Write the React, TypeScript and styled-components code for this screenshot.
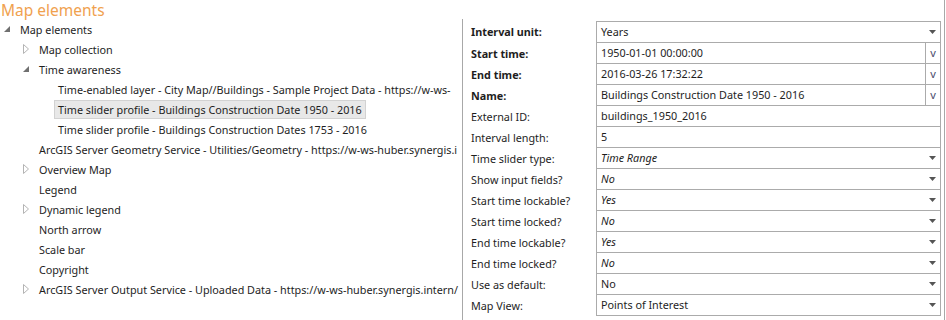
import React from 'react';
import styled, { createGlobalStyle } from 'styled-components';

const GlobalStyle = createGlobalStyle`
  html, body {
    margin: 0;
    padding: 0;
    background: #ffffff;
  }
  body {
    font-family: 'Noto Sans', 'Open Sans', 'Liberation Sans', sans-serif;
    font-size: 10.8px;
    color: #1e1e1e;
  }
`;

const Page = styled.div`
  width: 944px;
  height: 320px;
  border-right: 1px solid #a8a8a8;
  display: flex;
  flex-direction: column;
  overflow: hidden;
`;

const Title = styled.div`
  height: 21px;
  line-height: 21px;
  padding-left: 1px;
  font-size: 15.5px;
  color: #f0a14f;
`;

const Body = styled.div`
  flex: 1;
  display: flex;
  min-height: 0;
`;

const TreePanel = styled.div`
  width: 462px;
  margin-top: -2px;
  border-right: 1px solid #a8a8a8;
  overflow: hidden;
`;

const TreeRow = styled.div<{ $level: number }>`
  height: 20px;
  display: flex;
  align-items: center;
  padding-left: ${p => p.$level * 19}px;
  white-space: nowrap;
`;

const Toggle = styled.span`
  width: 16px;
  margin-left: 4px;
  display: flex;
  align-items: center;
  flex-shrink: 0;
`;

const Label = styled.span<{ $selected?: boolean }>`
  line-height: 17px;
  padding: 0 3px;
  margin-left: -4px;
  border: 1px solid ${p => (p.$selected ? '#d2d2d2' : 'transparent')};
  background: ${p => (p.$selected ? '#e8e8e8' : 'transparent')};
`;

const FormPanel = styled.div`
  flex: 1;
  padding: 0 3px 0 8px;
`;

const FieldGrid = styled.div`
  display: grid;
  grid-template-columns: 125px 1fr;
`;

const FieldLabel = styled.div<{ $bold?: boolean }>`
  height: 21px;
  line-height: 21px;
  font-weight: ${p => (p.$bold ? 700 : 400)};
  white-space: nowrap;
`;

const ValueBox = styled.div<{ $first?: boolean }>`
  height: 22px;
  box-sizing: border-box;
  margin-top: ${p => (p.$first ? 0 : -1)}px;
  border: 1px solid #ababab;
  display: flex;
  align-items: stretch;
`;

const ValueText = styled.div<{ $italic?: boolean }>`
  flex: 1;
  padding-left: 4px;
  line-height: 20px;
  font-style: ${p => (p.$italic ? 'italic' : 'normal')};
  white-space: nowrap;
  overflow: hidden;
`;

const DropArrow = styled.div`
  width: 16px;
  display: flex;
  align-items: center;
  justify-content: center;
`;

const PickButton = styled.div`
  width: 14px;
  border-left: 1px solid #ababab;
  display: flex;
  align-items: center;
  justify-content: center;
  color: #4a4a6a;
  font-size: 11px;
  line-height: 20px;
`;

const Expanded = () => (
  <svg width="6" height="6" viewBox="0 0 6 6">
    <path d="M6 0 L6 6 L0 6 Z" fill="#707070" />
  </svg>
);

const Collapsed = () => (
  <svg width="6" height="10" viewBox="0 0 6 10">
    <path d="M0.5 0.5 L5.5 5 L0.5 9.5 Z" fill="none" stroke="#b4b4b4" strokeWidth="1" />
  </svg>
);

const Caret = () => (
  <svg width="7" height="4" viewBox="0 0 7 4">
    <path d="M0 0 L7 0 L3.5 4 Z" fill="#555555" />
  </svg>
);

type Node = { text: string; level: number; toggle?: 'open' | 'closed'; selected?: boolean };

const tree: Node[] = [
  { text: 'Map elements', level: 0, toggle: 'open' },
  { text: 'Map collection', level: 1, toggle: 'closed' },
  { text: 'Time awareness', level: 1, toggle: 'open' },
  { text: 'Time-enabled layer - City Map//Buildings - Sample Project Data - https://w-ws-', level: 2 },
  { text: 'Time slider profile - Buildings Construction Date 1950 - 2016', level: 2, selected: true },
  { text: 'Time slider profile - Buildings Construction Dates 1753 - 2016', level: 2 },
  { text: 'ArcGIS Server Geometry Service - Utilities/Geometry - https://w-ws-huber.synergis.i', level: 1 },
  { text: 'Overview Map', level: 1, toggle: 'closed' },
  { text: 'Legend', level: 1 },
  { text: 'Dynamic legend', level: 1, toggle: 'closed' },
  { text: 'North arrow', level: 1 },
  { text: 'Scale bar', level: 1 },
  { text: 'Copyright', level: 1 },
  { text: 'ArcGIS Server Output Service - Uploaded Data - https://w-ws-huber.synergis.intern/', level: 1, toggle: 'closed' },
];

type Field = { label: string; value: string; bold?: boolean; italic?: boolean; kind: 'select' | 'pick' | 'text' };

const fields: Field[] = [
  { label: 'Interval unit:', value: 'Years', bold: true, kind: 'select' },
  { label: 'Start time:', value: '1950-01-01 00:00:00', bold: true, kind: 'pick' },
  { label: 'End time:', value: '2016-03-26 17:32:22', bold: true, kind: 'pick' },
  { label: 'Name:', value: 'Buildings Construction Date 1950 - 2016', bold: true, kind: 'pick' },
  { label: 'External ID:', value: 'buildings_1950_2016', kind: 'text' },
  { label: 'Interval length:', value: '5', kind: 'text' },
  { label: 'Time slider type:', value: 'Time Range', italic: true, kind: 'select' },
  { label: 'Show input fields?', value: 'No', italic: true, kind: 'select' },
  { label: 'Start time lockable?', value: 'Yes', italic: true, kind: 'select' },
  { label: 'Start time locked?', value: 'No', italic: true, kind: 'select' },
  { label: 'End time lockable?', value: 'Yes', italic: true, kind: 'select' },
  { label: 'End time locked?', value: 'No', italic: true, kind: 'select' },
  { label: 'Use as default:', value: 'No', kind: 'select' },
  { label: 'Map View:', value: 'Points of Interest', kind: 'select' },
];

export default function App() {
  return (
    <>
      <GlobalStyle />
      <Page>
        <Title>Map elements</Title>
        <Body>
          <TreePanel>
            {tree.map((n, i) => (
              <TreeRow key={i} $level={n.level}>
                <Toggle>
                  {n.toggle === 'open' && <Expanded />}
                  {n.toggle === 'closed' && <Collapsed />}
                </Toggle>
                <Label $selected={n.selected}>{n.text}</Label>
              </TreeRow>
            ))}
          </TreePanel>
          <FormPanel>
            <FieldGrid>
              {fields.map((f, i) => (
                <React.Fragment key={i}>
                  <FieldLabel $bold={f.bold}>{f.label}</FieldLabel>
                  <ValueBox $first={i === 0}>
                    <ValueText $italic={f.italic}>{f.value}</ValueText>
                    {f.kind === 'select' && (
                      <DropArrow>
                        <Caret />
                      </DropArrow>
                    )}
                    {f.kind === 'pick' && <PickButton>v</PickButton>}
                  </ValueBox>
                </React.Fragment>
              ))}
            </FieldGrid>
          </FormPanel>
        </Body>
      </Page>
    </>
  );
}
